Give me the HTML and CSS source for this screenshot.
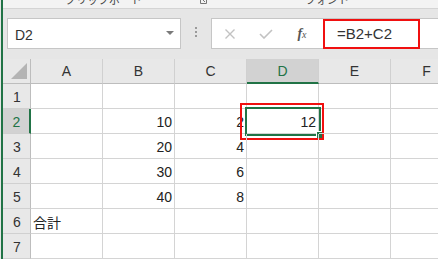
FILE: index.html
```html
<!DOCTYPE html>
<html lang="ja">
<head>
    <meta charset="UTF-8">
    <meta name="viewport" content="width=device-width, initial-scale=1.0">
    <title>合計 - Excel</title>
    <link rel="stylesheet" href="styles.css">
</head>
<body>
<div class="window">
    <!-- リボンの下端 -->
    <div class="ribbon">
        <span class="group-label clip">クリップボード</span>
        <svg class="launcher" width="7" height="5" viewBox="0 0 7 5"><path d="M0.5 0 V4.5 H6.5 V0" fill="none" stroke="#777" stroke-width="1"/><path d="M2 0 L5 3" stroke="#777" stroke-width="1"/></svg>
        <span class="group-label font">フォント</span>
    </div>

    <!-- 数式バー -->
    <div class="formula-bar">
        <div class="name-box">
            <span class="name">D2</span>
            <span class="arrow"></span>
        </div>
        <div class="grip">
            <svg width="3" height="11" viewBox="0 0 3 11"><rect x="0" y="0" width="2" height="2" fill="#9a9a9a"/><rect x="0" y="4" width="2" height="2" fill="#9a9a9a"/><rect x="0" y="8" width="2" height="2" fill="#9a9a9a"/></svg>
        </div>
        <div class="formula-box">
            <div class="btn">
                <svg width="12" height="10" viewBox="0 0 12 10"><path d="M1.5 0.5 L10.5 9.5 M10.5 0.5 L1.5 9.5" stroke="#c2c2c2" stroke-width="1.4"/></svg>
            </div>
            <div class="btn">
                <svg width="14" height="10" viewBox="0 0 14 10"><path d="M1 5 L5 9 L13 1" fill="none" stroke="#c2c2c2" stroke-width="1.6"/></svg>
            </div>
            <div class="btn fx"><i>f</i><sub>x</sub></div>
            <div class="formula">=B2+C2</div>
        </div>
    </div>

    <!-- シート -->
    <div class="sheet">
        <div class="corner"><span class="tri"></span></div>
        <div class="hd">A</div>
        <div class="hd">B</div>
        <div class="hd">C</div>
        <div class="hd sel">D</div>
        <div class="hd">E</div>
        <div class="hd">F</div>

        <div class="rh">1</div>
        <div class="c"></div><div class="c"></div><div class="c"></div><div class="c"></div><div class="c"></div><div class="c"></div>

        <div class="rh sel">2</div>
        <div class="c"></div>
        <div class="c num">10</div>
        <div class="c num">2</div>
        <div class="c num active">12
            <span class="cursor"><span class="handle"></span></span>
            <span class="mark"></span>
        </div>
        <div class="c"></div><div class="c"></div>

        <div class="rh">3</div>
        <div class="c"></div>
        <div class="c num">20</div>
        <div class="c num">4</div>
        <div class="c"></div><div class="c"></div><div class="c"></div>

        <div class="rh">4</div>
        <div class="c"></div>
        <div class="c num">30</div>
        <div class="c num">6</div>
        <div class="c"></div><div class="c"></div><div class="c"></div>

        <div class="rh">5</div>
        <div class="c"></div>
        <div class="c num">40</div>
        <div class="c num">8</div>
        <div class="c"></div><div class="c"></div><div class="c"></div>

        <div class="rh">6</div>
        <div class="c text">合計</div>
        <div class="c"></div><div class="c"></div><div class="c"></div><div class="c"></div><div class="c"></div>

        <div class="rh">7</div>
        <div class="c"></div><div class="c"></div><div class="c"></div><div class="c"></div><div class="c"></div><div class="c"></div>
    </div>
</div>
</body>
</html>
```

FILE: styles.css
```css
* {
    box-sizing: border-box;
}
body {
    margin: 0;
    width: 438px;
    height: 259px;
    overflow: hidden;
    background-color: #e6e6e6;
    font-family: "Liberation Sans", "Noto Sans CJK JP", sans-serif;
    color: #222;
}
.window {
    margin-left: 1px;
    border-left: 2px solid #217346;
    height: 259px;
}

/* リボン */
.ribbon {
    height: 9px;
    display: flex;
    align-items: flex-end;
    overflow: hidden;
    background-color: #f3f3f3;
    border-bottom: 1px solid #d4d4d4;
}
.group-label {
    font-family: "Noto Sans CJK JP", sans-serif;
    font-size: 11px;
    line-height: 14px;
    color: #444;
    margin-bottom: 2px;
    white-space: nowrap;
}
.clip {
    margin-left: 62px;
}
.launcher {
    margin-left: 58px;
    margin-bottom: 4px;
}
.font {
    margin-left: 98px;
}

/* 数式バー */
.formula-bar {
    height: 50px;
    padding-top: 9px;
    padding-left: 4px;
    display: flex;
    align-items: flex-start;
}
.name-box {
    width: 174px;
    height: 31px;
    background-color: white;
    border: 1px solid #c6c6c6;
    display: flex;
    align-items: flex-start;
    padding-left: 7px;
    padding-right: 6px;
}
.name {
    flex: 1;
    font-size: 14px;
    line-height: 26px;
    padding-top: 3px;
    color: #333;
}
.arrow {
    margin-top: 12px;
    width: 0;
    height: 0;
    border-left: 4px solid transparent;
    border-right: 4px solid transparent;
    border-top: 4px solid #7a7a7a;
}
.grip {
    width: 30px;
    height: 31px;
    display: flex;
    justify-content: center;
    padding-top: 9px;
    padding-left: 1px;
}
.formula-box {
    flex: 1;
    height: 31px;
    background-color: white;
    border: 1px solid #c6c6c6;
    border-right: none;
    display: flex;
    align-items: flex-start;
}
.btn {
    width: 36px;
    height: 29px;
    display: flex;
    align-items: center;
    justify-content: center;
    padding-top: 1px;
}
.fx {
    font-family: "Liberation Serif", serif;
    font-size: 14px;
    color: #555;
    margin-right: 3px;
}
.fx i {
    font-weight: bold;
}
.fx sub {
    font-style: italic;
    font-size: 10px;
    vertical-align: -1px;
}
.formula {
    width: 97px;
    height: 30px;
    border: 2px solid #f01010;
    padding-left: 12px;
    font-size: 15px;
    line-height: 26px;
    color: #333;
}

/* シート */
.sheet {
    display: grid;
    grid-template-columns: 28px repeat(6, 72px);
    grid-auto-rows: 25px;
    overflow: hidden;
    background-color: white;
}
.corner, .hd, .rh {
    background-color: #e8e8e8;
    color: #333;
    font-size: 14px;
}
.corner {
    border-right: 1px solid #bdbdbd;
    border-bottom: 1px solid #bdbdbd;
    display: flex;
    align-items: flex-end;
    justify-content: flex-end;
    padding: 0 3px 4px 0;
}
.tri {
    width: 0;
    height: 0;
    border-left: 16px solid transparent;
    border-bottom: 16px solid #b4b4b4;
}
.hd {
    border-right: 1px solid #d0d0d0;
    border-bottom: 1px solid #bdbdbd;
    text-align: center;
    line-height: 24px;
}
.hd.sel {
    background-color: #d2d2d2;
    color: #217346;
    border-bottom: 2px solid #217346;
}
.rh {
    border-right: 1px solid #bdbdbd;
    border-bottom: 1px solid #d0d0d0;
    display: flex;
    align-items: flex-end;
    justify-content: center;
    line-height: 16px;
    padding-bottom: 3px;
    padding-left: 1px;
}
.rh.sel {
    background-color: #d2d2d2;
    color: #217346;
    border-right: 2px solid #217346;
}
.c {
    position: relative;
    border-right: 1px solid #d4d4d4;
    border-bottom: 1px solid #d4d4d4;
    display: flex;
    align-items: flex-end;
    font-size: 14px;
    line-height: 16px;
    padding-bottom: 3px;
    color: #222;
}
.num {
    justify-content: flex-end;
    padding-right: 2px;
}
.text {
    padding-left: 2px;
    font-family: "Noto Sans CJK JP", sans-serif;
    font-size: 14px;
}

/* 選択セル */
.cursor {
    position: absolute;
    left: -2px;
    top: -2px;
    width: 76px;
    height: 29px;
    border: 2px solid #217346;
}
.handle {
    position: absolute;
    right: -5px;
    bottom: -5px;
    width: 8px;
    height: 8px;
    background-color: #217346;
    border: 1px solid white;
}
.mark {
    position: absolute;
    left: -7px;
    top: -6px;
    width: 84px;
    height: 37px;
    border: 2px solid #f01010;
}
```
